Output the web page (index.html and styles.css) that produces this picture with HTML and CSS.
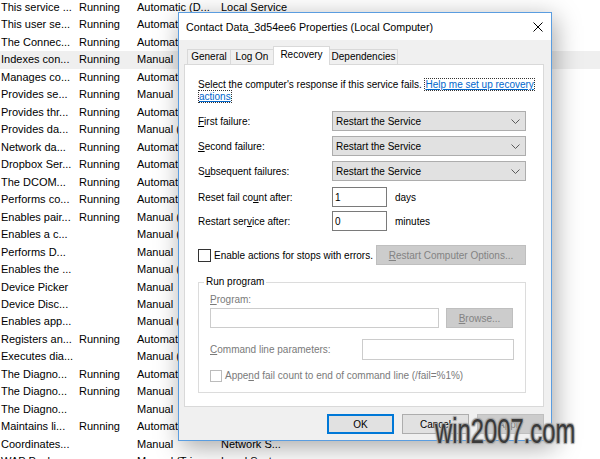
FILE: index.html
```html
<!DOCTYPE html>
<html>
<head>
<meta charset="utf-8">
<link rel="stylesheet" href="styles.css">
</head>
<body>
<div class="services">
  <div class="svc"><span>This service ...</span><span>Running</span><span>Automatic (D...</span><span>Local Service</span></div>
  <div class="svc"><span>This user se...</span><span>Running</span><span>Automatic</span><span>Local System</span></div>
  <div class="svc"><span>The Connec...</span><span>Running</span><span>Automatic</span><span>Local System</span></div>
  <div class="svc sel"><span>Indexes con...</span><span>Running</span><span>Manual</span><span>Local System</span></div>
  <div class="svc"><span>Manages co...</span><span>Running</span><span>Automatic</span><span>Local System</span></div>
  <div class="svc"><span>Provides se...</span><span>Running</span><span>Manual</span><span>Local System</span></div>
  <div class="svc"><span>Provides thr...</span><span>Running</span><span>Automatic</span><span>Local System</span></div>
  <div class="svc"><span>Provides da...</span><span>Running</span><span>Manual (Trig...</span><span>Local System</span></div>
  <div class="svc"><span>Network da...</span><span>Running</span><span>Automatic</span><span>Local System</span></div>
  <div class="svc"><span>Dropbox Ser...</span><span>Running</span><span>Automatic</span><span>Local System</span></div>
  <div class="svc"><span>The DCOM...</span><span>Running</span><span>Automatic</span><span>Local System</span></div>
  <div class="svc"><span>Performs co...</span><span>Running</span><span>Automatic</span><span>Local System</span></div>
  <div class="svc"><span>Enables pair...</span><span>Running</span><span>Manual (Trig...</span><span>Local System</span></div>
  <div class="svc"><span>Enables a c...</span><span></span><span>Manual (Trig...</span><span>Local System</span></div>
  <div class="svc"><span>Performs D...</span><span></span><span>Manual</span><span>Local System</span></div>
  <div class="svc"><span>Enables the ...</span><span></span><span>Manual (Trig...</span><span>Local System</span></div>
  <div class="svc"><span>Device Picker</span><span></span><span>Manual</span><span>Local System</span></div>
  <div class="svc"><span>Device Disc...</span><span></span><span>Manual</span><span>Local System</span></div>
  <div class="svc"><span>Enables app...</span><span></span><span>Manual (Trig...</span><span>Local System</span></div>
  <div class="svc"><span>Registers an...</span><span>Running</span><span>Automatic</span><span>Local System</span></div>
  <div class="svc"><span>Executes dia...</span><span></span><span>Manual (Trig...</span><span>Local System</span></div>
  <div class="svc"><span>The Diagno...</span><span>Running</span><span>Automatic</span><span>Local Service</span></div>
  <div class="svc"><span>The Diagno...</span><span>Running</span><span>Manual</span><span>Local Service</span></div>
  <div class="svc"><span>The Diagno...</span><span></span><span>Manual</span><span>Local System</span></div>
  <div class="svc"><span>Maintains li...</span><span>Running</span><span>Automatic</span><span>Local System</span></div>
  <div class="svc"><span>Coordinates...</span><span></span><span>Manual</span><span>Network S...</span></div>
  <div class="svc"><span>WAP Push...</span><span></span><span>Manual (Trig...</span><span>Local Syst...</span></div>
</div>

<div class="dialog">
  <div class="titlebar">
    <span class="title">Contact Data_3d54ee6 Properties (Local Computer)</span>
    <svg class="close" width="10" height="10" viewBox="0 0 10 10"><path d="M0.5 0.5 L9.5 9.5 M9.5 0.5 L0.5 9.5" stroke="#000" stroke-width="1" fill="none"/></svg>
  </div>
  <div class="dbody">
    <div class="tabs">
      <div class="tab t-general">General</div>
      <div class="tab t-logon">Log On</div>
      <div class="tab t-recovery active">Recovery</div>
      <div class="tab t-deps">Dependencies</div>
    </div>
    <div class="panel">
      <p class="intro">Select the computer's response if this service fails. <span class="link">Help me set up recovery<br>actions</span></p>

      <div class="content">
        <div class="row r1"><span class="lbl"><u>F</u>irst failure:</span><div class="combo"><span>Restart the Service</span><svg width="9" height="5" viewBox="0 0 9 5"><path d="M0.5 0.5 L4.5 4.5 L8.5 0.5" stroke="#5a5a5a" fill="none"/></svg></div></div>
        <div class="row r2"><span class="lbl"><u>S</u>econd failure:</span><div class="combo"><span>Restart the Service</span><svg width="9" height="5" viewBox="0 0 9 5"><path d="M0.5 0.5 L4.5 4.5 L8.5 0.5" stroke="#5a5a5a" fill="none"/></svg></div></div>
        <div class="row r3"><span class="lbl">S<u>u</u>bsequent failures:</span><div class="combo"><span>Restart the Service</span><svg width="9" height="5" viewBox="0 0 9 5"><path d="M0.5 0.5 L4.5 4.5 L8.5 0.5" stroke="#5a5a5a" fill="none"/></svg></div></div>
        <div class="row r4"><span class="lbl">Reset fail co<u>u</u>nt after:</span><div class="field">1</div><span class="unit">days</span></div>
        <div class="row r5"><span class="lbl">Restart ser<u>v</u>ice after:</span><div class="field">0</div><span class="unit">minutes</span></div>

        <div class="checkrow">
          <span class="check"></span><span class="checklbl">Enable actions for stops with errors.</span>
          <div class="btn-dis wide"><u>R</u>estart Computer Options...</div>
        </div>

        <fieldset class="group">
          <legend>Run program</legend>
          <div class="dlbl prog-lbl"><u>P</u>rogram:</div>
          <div class="progrow">
            <div class="dfield prog"></div>
            <div class="btn-dis browse"><u>B</u>rowse...</div>
          </div>
          <div class="cmdrow">
            <span class="dlbl cmd-lbl"><u>C</u>ommand line parameters:</span>
            <div class="dfield cmd"></div>
          </div>
          <div class="appendrow">
            <span class="check dis"></span><span class="dlbl">Appe<u>n</u>d fail count to end of command line (/fail=%1%)</span>
          </div>
        </fieldset>
      </div>
    </div>
    <div class="buttons">
      <div class="btn ok">OK</div>
      <div class="btn">Cancel</div>
      <div class="btn apply">Apply</div>
    </div>
  </div>
</div>

<div class="watermark">win2007.com</div>
</body>
</html>
```

FILE: styles.css
```css
* { box-sizing: border-box; }
html, body { margin: 0; padding: 0; }
body {
  width: 600px;
  height: 459px;
  overflow: hidden;
  position: relative;
  background: #fff;
  color: #000;
  font-family: "Liberation Sans", Arial, sans-serif;
}

/* background services list */
.services { margin-top: -1px; font-size: 11px; }
.svc {
  display: grid;
  grid-template-columns: 78px 58px 84px 1fr;
  height: 17.47px;
  line-height: 17.47px;
  padding-left: 1px;
  white-space: nowrap;
}
.svc.sel { background: #efefef; }

/* dialog window */
.dialog {
  position: absolute;
  left: 178px;
  top: 12px;
  width: 374px;
  height: 429px;
  border: 1px solid #5a9de0;
  background: #f0f0f0;
  box-shadow: 3px 6px 24px rgba(0, 0, 0, 0.35);
  display: flex;
  flex-direction: column;
  font-size: 10px;
}
.titlebar {
  height: 27px;
  flex: none;
  background: #fff;
  display: flex;
  align-items: center;
  justify-content: space-between;
  padding: 0 8px 0 7px;
  font-size: 10.7px;
}
.close { display: block; }

.dbody {
  flex: 1;
  padding: 6px 7px 7px 5px;
  display: flex;
  flex-direction: column;
}
.tabs {
  display: flex;
  align-items: flex-start;
  height: 19px;
  margin-bottom: -1px;
  padding-left: 3px;
  position: relative;
  z-index: 1;
}
.tab {
  height: 15px;
  margin-top: 3px;
  border: 1px solid #d9d9d9;
  border-bottom: none;
  background: #f0f0f0;
  text-align: center;
  line-height: 14px;
  margin-right: -1px;
}
.tab.active {
  height: 19px;
  margin-top: 0;
  background: #fff;
  line-height: 16px;
}
.t-general { width: 44px; }
.t-logon { width: 44px; }
.t-recovery { width: 57px; }
.t-deps { width: 69px; }

.panel {
  height: 343px;
  flex: none;
  background: #fff;
  border: 1px solid #d9d9d9;
  padding: 14px 0 0 13px;
}
.intro { margin: 0; line-height: 12px; }
.link {
  color: #0066cc;
  text-decoration: underline;
  border: 1px dotted #333;
  -webkit-box-decoration-break: clone;
  box-decoration-break: clone;
}

.content { width: 328px; margin-top: 8px; }
.row { display: flex; align-items: center; height: 20px; }
.r2, .r3 { margin-top: 5px; }
.r4 { margin-top: 6px; }
.r5 { margin-top: 4px; }
.lbl { width: 134px; flex: none; }
.combo {
  width: 195px;
  height: 20px;
  background: #e1e1e1;
  border: 1px solid #adadad;
  display: flex;
  align-items: center;
  justify-content: space-between;
  padding: 0 5px 0 3px;
}
.combo svg { display: block; }
.field {
  width: 55px;
  height: 20px;
  border: 1px solid #7a7a7a;
  background: #fff;
  padding-left: 2px;
  display: flex;
  align-items: center;
}
.unit { margin-left: 8px; }

.checkrow {
  display: flex;
  align-items: center;
  height: 20px;
  margin-top: 14px;
}
.check {
  width: 13px;
  height: 13px;
  border: 1px solid #333;
  background: #fff;
  flex: none;
}
.check.dis { width: 12px; height: 12px; border-color: #bcbcbc; }
.checklbl { margin-left: 3px; }
.btn-dis {
  height: 20px;
  background: #cccccc;
  border: 1px solid #bfbfbf;
  color: #838383;
  display: flex;
  align-items: center;
  justify-content: center;
}
.wide { width: 150px; margin-left: auto; }

.group {
  margin: 11px 0 0;
  width: 328px;
  border: 1px solid #dcdcdc;
  padding: 0 11px 10px;
  min-width: 0;
}
.group legend {
  padding: 0 2px;
  margin-left: -6px;
  line-height: 12px;
}
.dlbl { color: #7a7a7a; }
.prog-lbl { margin-top: 6px; line-height: 12px; }
.progrow { display: flex; margin-top: 2px; }
.dfield { height: 20px; border: 1px solid #cccccc; background: #fff; }
.prog { width: 229px; }
.browse { width: 67px; margin-left: 7px; }
.cmdrow { display: flex; align-items: center; margin-top: 11px; height: 21px; }
.cmd-lbl { width: 152px; flex: none; }
.cmd { width: 152px; height: 21px; }
.appendrow { display: flex; align-items: center; margin-top: 9px; height: 13px; gap: 3px; }

.buttons {
  display: flex;
  justify-content: flex-end;
  gap: 8px;
  margin-top: 7px;
}
.btn {
  width: 67px;
  height: 20px;
  background: #e1e1e1;
  border: 1px solid #adadad;
  display: flex;
  align-items: center;
  justify-content: center;
}
.btn.ok { border-color: #0078d7; box-shadow: inset 0 0 0 1px #0078d7; }
.btn.apply { background: #cccccc; border-color: #bfbfbf; color: #838383; }

.watermark {
  position: absolute;
  left: 435px;
  top: 413px;
  font-family: "Liberation Sans", Arial, sans-serif;
  font-size: 35px;
  line-height: 35px;
  color: #3a3a3a;
  transform: scaleX(0.68);
  transform-origin: left top;
  white-space: nowrap;
  text-shadow: 1px 1px 1px #a5a5a5, -1px -1px 1px #a5a5a5, 1px -1px 1px #a5a5a5, -1px 1px 1px #a5a5a5, 0 0 3px #b0b0b0;
}
```
